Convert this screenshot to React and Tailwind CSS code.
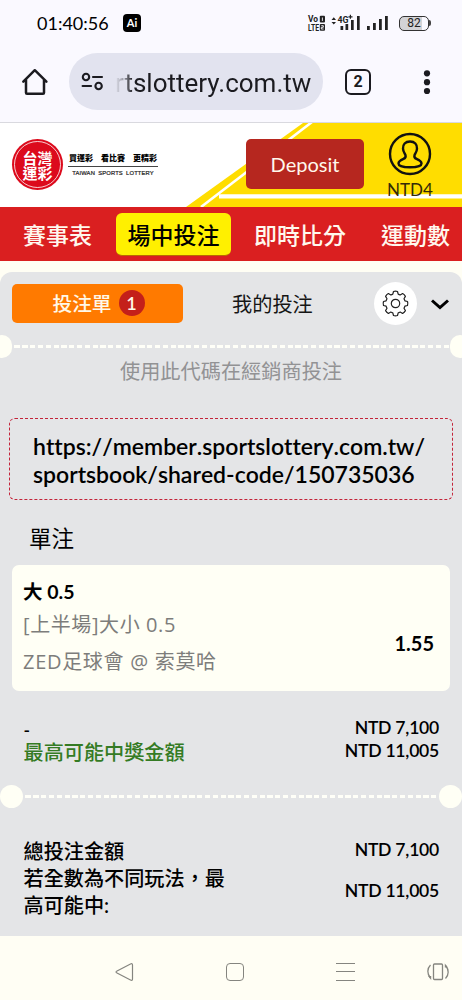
import React from "react";

const cjk = "font-['Lato','Noto_Sans_CJK_TC',sans-serif]";

function StatusBar() {
  return (
    <div className="flex h-[46px] items-center text-black">
      <span className="ml-[37px] w-[86px] whitespace-nowrap font-['Lato',sans-serif] text-[18px] leading-6">01:40:56</span>
      <span className="flex h-[18px] w-[18px] items-center justify-center rounded-[4px] bg-black font-['Lato',sans-serif] text-[11px] font-bold text-white">Ai</span>
      <svg className="ml-[166px] h-[18px] w-[19px]" viewBox="0 0 19 18" fill="#222" fontFamily="Roboto, sans-serif" fontWeight="700">
        <text x="1" y="8.300" fontSize="8.500" textLength="10" lengthAdjust="spacingAndGlyphs">Vo</text>
        <text x="1" y="16.500" fontSize="8.500" textLength="11" lengthAdjust="spacingAndGlyphs">LTE</text>
        <rect x="12.800" y="1.800" width="5.200" height="6.700" rx="1" />
        <rect x="12.800" y="10" width="5.200" height="6.700" rx="1" />
        <path d="M15.400 3.500v3.400M14.300 11.700h2v1.600h-2v1.700h2.300" stroke="#faf9ff" strokeWidth="0.900" fill="none" />
      </svg>
      <svg className="ml-[4px] h-[20px] w-[58px]" viewBox="0 0 58 20" fill="#222">
        <path d="M1.500 7 3.800 4.200 6 7ZM1.500 9 3.800 11.500 6 9ZM10.500 13h2.700v4h-2.700zM15.500 11h2.700v6h-2.700zM21 7h2.700v10H21zM27 3h2.700v14H27zM37 13h2.800v4H37zM43 10h2.800v7H43zM49 6h2.800v11H49zM55 3h2.800v14H55z" />
        <text x="7.500" y="9.500" fontSize="9.500" fontWeight="700" fontFamily="Roboto, sans-serif" textLength="11" lengthAdjust="spacingAndGlyphs">4G</text>
        <path d="M19.800 1.800h1.200v1.400H22.500v1.200h-1.500v1.400h-1.200V4.400h-1.400V3.200h1.400z" />
      </svg>
      <div className="ml-[11px] flex items-center">
        <span className="flex h-[15px] w-[30px] items-center justify-center rounded-[5px] border-[1.5px] border-[#333] bg-[linear-gradient(90deg,#d3d3d6_80%,#faf9ff_80%)] font-['Roboto',sans-serif] text-[12px] leading-none text-[#222]">82</span>
        <span className="h-[6px] w-[2px] rounded-r bg-[#444]" />
      </div>
    </div>
  );
}

function BrowserBar() {
  return (
    <div className="flex h-[77px] items-center border-b border-[#d9d9df] pb-[5px] text-[#1b1b20]">
      <svg className="ml-[21px] h-[28px] w-[28px]" viewBox="0 0 28 28" fill="none" stroke="currentColor" strokeWidth="2.5" strokeLinejoin="round" strokeLinecap="round">
        <path d="M2.300 13.600 13.800 2.200 25.400 13.600M5 11.500V24.800q0 1 1 1H22q1 0 1-1V11.500" />
      </svg>
      <div className="ml-[20px] flex h-[57px] w-[254px] items-center rounded-full bg-[#e2e3ef]">
        <svg className="ml-[12px] h-[20px] w-[23px]" viewBox="0 0 23 20" fill="none" stroke="currentColor" strokeWidth="2.1" strokeLinecap="round">
          <circle cx="5" cy="5" r="3.2" /><circle cx="17.6" cy="14" r="3.2" />
          <path d="M12 5h9M1.600 14h8.500" />
        </svg>
        <span className="ml-[11px] mt-[2px] whitespace-nowrap bg-[linear-gradient(90deg,#1b1b2000_0px,#1b1b2060_9px,#1b1b20_18px)] bg-clip-text font-['Roboto',sans-serif] text-[26px] leading-[34px] text-transparent">rtslottery.com.tw</span>
      </div>
      <span className="ml-[22px] flex h-[26px] w-[26px] items-center justify-center rounded-[6px] border-[2.5px] border-current font-['Roboto',sans-serif] text-[16px] font-bold leading-none">2</span>
      <svg className="ml-[52px] h-[26px] w-[8px]" viewBox="0 0 8 26" fill="currentColor">
        <circle cx="4" cy="4.3" r="3.1" /><circle cx="4" cy="13.2" r="3.1" /><circle cx="4" cy="22" r="3.1" />
      </svg>
    </div>
  );
}

function SiteHeader() {
  return (
    <div className="relative h-[84px] bg-white">
      <svg className="absolute inset-0 h-[84px] w-[462px]" viewBox="0 0 462 84">
        <path d="M303 0H462V84H186z" fill="#ffdd00" />
        <path d="M312 -1 201 84" stroke="#fff" strokeWidth="2.6" />
        <path d="M219 73.300H462" stroke="#fff" strokeWidth="4.300" />
      </svg>
      <div className="relative flex h-full">
        <div className="ml-[12px] mt-[16px] flex h-[51px] w-[51px] flex-col items-center justify-center rounded-full bg-[#dc0a1c] p-[2px]">
          <div className="flex h-[47px] w-[47px] items-center justify-center rounded-full border border-white/80">
            <span className="w-[31px] break-all text-center font-['Noto_Sans_CJK_TC',sans-serif] text-[15px] font-bold leading-[15px] text-white">台灣運彩</span>
          </div>
        </div>
        <div className="ml-[5px] mt-[29px] flex w-[90px] flex-col items-center">
          <div className="flex h-[15px] w-full items-center justify-between whitespace-nowrap border-b border-[#444] px-[1px] pb-[3px] font-['Noto_Sans_CJK_TC',sans-serif] text-[8px] font-black leading-none text-black">
            <span>買運彩</span><span>看比賽</span><span>更精彩</span>
          </div>
          <span className="whitespace-nowrap pt-[2px] font-['Liberation_Sans',sans-serif] text-[5.8px] leading-[8px] tracking-[0.15px] text-[#222] [-webkit-text-stroke:0.2px_#222] [word-spacing:1.5px]">TAIWAN SPORTS LOTTERY</span>
        </div>
        <button className="ml-[88px] mt-[16px] h-[50px] w-[118px] rounded-[5px] bg-[#b6271f] font-['Lato',sans-serif] text-[20px] text-[#fff8ec]">Deposit</button>
        <div className="ml-[21px] mt-[9px] flex w-[50px] flex-col items-center">
          <svg className="h-[44px] w-[44px] shrink-0" viewBox="0 0 44 44" fill="none" stroke="#111" strokeWidth="2.4">
            <circle cx="22" cy="22" r="20" />
            <path d="M22 9.500c-4.700 0-7.300 3-7 7.200.2 3.200 1.700 4.500 2.500 6.500.5 1.800-.2 2.900-2 3.700-2.700 1.200-5 2.500-5 4.500C10.500 34 16 35.300 22 35.300S33.500 34 33.500 31.400c0-2-2.300-3.300-5-4.500-1.800-.8-2.500-1.900-2-3.700.8-2 2.300-3.300 2.500-6.500.3-4.200-2.300-7.200-7-7.200Z" />
          </svg>
          <span className="mt-[3px] font-['Lato',sans-serif] text-[17px] leading-[22px] text-[#332a08]">NTD4</span>
        </div>
      </div>
    </div>
  );
}

function Nav() {
  return (
    <nav className="flex h-[54px] items-center overflow-hidden whitespace-nowrap bg-[#da1f20] font-['Noto_Sans_CJK_TC',sans-serif] text-[23px] font-medium leading-[34px] text-[#fff8ee]">
      <span className="ml-[23px] w-[93px] shrink-0">賽事表</span>
      <span className="flex h-[43px] w-[115px] shrink-0 items-center justify-center rounded-[6px] border-b border-[#b96a00] bg-[#fff000] text-black">場中投注</span>
      <span className="ml-[23px] w-[127px] shrink-0">即時比分</span>
      <span className="shrink-0">運動數</span>
    </nav>
  );
}

function Perforation({ edge }) {
  return (
    <div className={edge ? "-mx-[8px] flex h-[24px] items-center" : "flex h-[24px] items-center"}>
      <span className={edge ? "h-[23px] w-[20px] shrink-0 rounded-full bg-[#fffff5]" : "h-[23px] w-[23px] shrink-0 rounded-full bg-[#fffff5]"} />
      <span className="h-[3px] flex-1 bg-[repeating-linear-gradient(90deg,transparent_0px,transparent_2.500px,#fffff8_2.500px,#fffff8_7.800px)]" />
      <span className={edge ? "h-[23px] w-[20px] shrink-0 rounded-full bg-[#fffff5]" : "h-[23px] w-[23px] shrink-0 rounded-full bg-[#fffff5]"} />
    </div>
  );
}

function SlipTabs() {
  return (
    <div className="flex h-[62px] items-center">
      <div className="ml-[12px] flex h-[39px] w-[171px] items-center justify-center rounded-[5px] bg-[#ff7a00] pl-[2px] text-[19.7px] font-medium leading-none text-[#fff8e8]">
        <span className="mt-[2px]">投注單</span>
        <span className="ml-[7px] flex h-[26px] w-[26px] items-center justify-center rounded-full bg-[#c4201a] font-['Lato',sans-serif] text-[18px] font-semibold">1</span>
      </div>
      <span className="ml-[49px] mt-[2px] w-[142px] text-[20.2px] leading-none text-[#151515]">我的投注</span>
      <span className="flex h-[43px] w-[43px] items-center justify-center rounded-full bg-white">
        <svg className="h-[27px] w-[27px]" viewBox="0 0 27 27" fill="none" stroke="#222" strokeWidth="1.2" strokeLinejoin="round">
          <path d="M10.800 4.100 11.500 1.500Q13.500.8 15.500 1.500L16.200 4.100Q17.300 4.500 18.200 5L20.600 3.600Q22.400 4.600 23.400 6.400L22 8.800Q22.500 9.700 22.900 10.800L25.500 11.500Q26.200 13.500 25.500 15.500L22.900 16.200Q22.500 17.300 22 18.200L23.400 20.600Q22.400 22.400 20.600 23.400L18.200 22Q17.300 22.500 16.200 22.900L15.500 25.500Q13.500 26.200 11.500 25.500L10.800 22.900Q9.700 22.500 8.800 22L6.400 23.400Q4.600 22.400 3.600 20.600L5 18.200Q4.500 17.300 4.100 16.200L1.500 15.500Q.8 13.500 1.500 11.500L4.100 10.800Q4.500 9.700 5 8.800L3.600 6.400Q4.600 4.600 6.400 3.600L8.800 5Q9.700 4.500 10.800 4.100Z" />
          <circle cx="13.5" cy="13.5" r="4.2" />
        </svg>
      </span>
      <svg className="ml-[14px] mt-[2px] h-[11px] w-[18px]" viewBox="0 0 18 11" fill="none" stroke="#000" strokeWidth="3">
        <path d="M1 1.500 9 8.600 17 1.500" />
      </svg>
    </div>
  );
}

function BetSlip() {
  return (
    <section className={`flex h-[664px] flex-col overflow-hidden rounded-t-[12px] bg-[#e4e5e7] ${cjk}`}>
      <SlipTabs />
      <Perforation edge />
      <p className="h-[26px] text-center text-[20.2px] leading-[26px] text-[#929294]">使用此代碼在經銷商投注</p>
      <div className="ml-[9px] mt-[34px] h-[82px] w-[444px] whitespace-nowrap rounded-[6px] border border-dashed border-[#c3243a] pl-[23px] pt-[13px] text-[23px] font-semibold leading-[28px] text-black [font-kerning:none] [font-variant-ligatures:none]">
        <div>https://member.sportslottery.com.tw/</div>
        <div>sportsbook/shared-code/150735036</div>
      </div>
      <h2 className="ml-[29px] mt-[24px] h-[30px] text-[22.5px] leading-[30px] text-black">單注</h2>
      <div className="ml-[12px] mt-[11px] flex h-[126px] w-[438px] items-center justify-between rounded-[7px] bg-[#fffff5] pl-[11px] pr-[16px]">
        <div className="flex h-full flex-col whitespace-nowrap font-['Open_Sans','Noto_Sans_CJK_TC',sans-serif] text-[20px] text-[#7d7d7b]">
          <span className="mt-[13px] h-[28px] font-['Lato','Noto_Sans_CJK_TC',sans-serif] text-[19.5px] font-bold leading-[28px] text-black">大 0.5</span>
          <span className="mt-[5px] h-[28px] leading-[28px] tracking-[0.6px]">[上半場]大小 0.5</span>
          <span className="mt-[9px] h-[28px] leading-[28px] tracking-[0.7px]">ZED足球會 @ 索莫哈</span>
        </div>
        <span className="mt-[30px] text-[20px] font-bold leading-[26px] text-black">1.55</span>
      </div>
      <div className="mt-[26px] flex flex-col pl-[23.5px] pr-[23px] text-[17.6px] font-semibold tracking-[-0.25px] text-black">
        <div className="flex h-[23px] items-center justify-between"><span className="mt-[3px]">-</span><span>NTD 7,100</span></div>
        <div className="flex h-[23px] items-center justify-between"><span className="mt-[2px] text-[20.15px] font-medium leading-none tracking-normal text-[#347b24]">最高可能中獎金額</span><span>NTD 11,005</span></div>
      </div>
      <div className="mt-[21px]"><Perforation /></div>
      <div className="mt-[30px] flex flex-col pl-[23.5px] pr-[23px] text-[17.6px] font-semibold tracking-[-0.25px] text-black">
        <div className="flex h-[27px] items-center justify-between"><span className="text-[20.15px] font-medium leading-[27px] tracking-normal">總投注金額</span><span className="-mt-[3px]">NTD 7,100</span></div>
        <div className="flex h-[54px] items-center justify-between">
          <span className="w-[210px] text-[20.15px] font-medium leading-[27px] tracking-normal">若全數為不同玩法，最<br />高可能中:</span>
          <span className="-mt-[2px]">NTD 11,005</span>
        </div>
      </div>
    </section>
  );
}

function SystemNav() {
  return (
    <div className="flex h-[64px] items-center bg-[#fffef4] pt-[7px] text-[#85857f]">
      <svg className="ml-[115px] h-[20px] w-[19px]" viewBox="0 0 19 20" fill="none" stroke="currentColor" strokeWidth="1.2" strokeLinejoin="round">
        <path d="M2 9 15.500 2q2-1 2 1V17q0 2-2 1L2 11q-2-1 0-2Z" />
      </svg>
      <span className="ml-[92px] h-[18px] w-[18px] rounded-[4px] border border-current" />
      <span className="ml-[92px] flex h-[18px] w-[19px] flex-col justify-between">
        <i className="h-px bg-current" /><i className="h-px bg-current" /><i className="h-px bg-current" />
      </span>
      <svg className="ml-[71px] h-[20px] w-[24px]" viewBox="0 0 24 20" fill="none" stroke="currentColor" strokeWidth="1.3">
        <rect x="7.5" y="2" width="9" height="15.5" rx="1" />
        <path d="M4.500 3C1 6.500 1 12 4.300 15.800M19.700 3.700C23 7.500 23 13 19.500 16.500" />
        <path d="M2 14h3.200v4zM22 5.500h-3.200v-4z" fill="currentColor" stroke="none" />
      </svg>
    </div>
  );
}

export default function App() {
  return (
    <main className="flex h-[1000px] w-[462px] flex-col overflow-hidden bg-[#fffef4]">
      <div className="bg-[#faf9ff]">
        <StatusBar />
        <BrowserBar />
      </div>
      <SiteHeader />
      <Nav />
      <div className="h-[11px] bg-[#fffef4]" />
      <BetSlip />
      <SystemNav />
    </main>
  );
}
